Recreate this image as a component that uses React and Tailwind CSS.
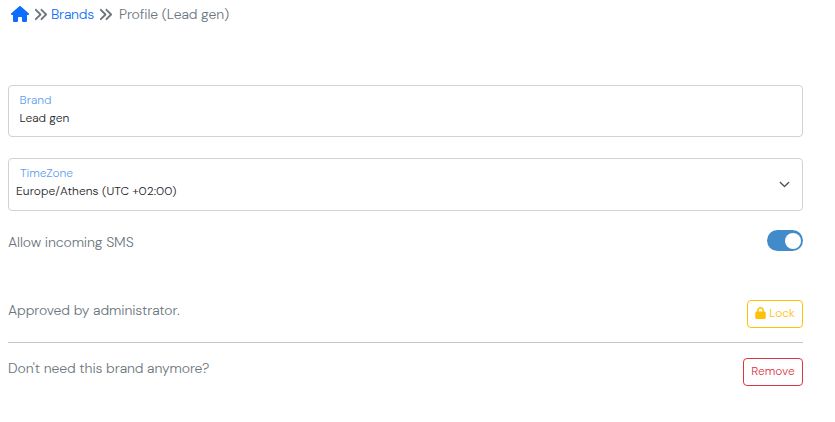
import React, { useState } from 'react'
import { FaAnglesRight, FaHouse, FaLock } from 'react-icons/fa6'
import { BsChevronDown } from 'react-icons/bs'

function Breadcrumb() {
  return (
    <nav aria-label="breadcrumb" className="flex h-[29px] items-center pl-[3px] text-[14px]">
      <a href="#" aria-label="Home" className="text-[#0d6efd]">
        <FaHouse className="mb-[2px] h-[16px] w-[18px]" />
      </a>
      <FaAnglesRight className="mb-px ml-1 h-[15px] w-[15px] text-[#6c757d]" />
      <a href="#" className="ml-[3px] w-[45px] whitespace-nowrap tracking-[-0.25px] text-[#0d6efd]">Brands</a>
      <FaAnglesRight className="mb-px ml-[2px] h-[15px] w-[15px] text-[#6c757d]" />
      <span className="ml-[6px] tracking-[-0.1px]">Profile (Lead gen)</span>
    </nav>
  )
}

export default function App() {
  const [brand, setBrand] = useState('Lead gen')
  const [allowSms, setAllowSms] = useState(true)

  return (
    <div className="h-[422px] bg-white pl-2 pr-8 font-['DM_Sans','Inter',sans-serif] text-[14px] font-light text-[#6c757d]">
      <Breadcrumb />

      <label className="mt-14 flex h-[52px] flex-col rounded-[4px] border border-[#d0d2d4] pl-[10.5px] pt-[5px] text-[12px]">
        <span className="h-[18px] leading-[18px] text-[#5f9fee]">Brand</span>
        <input
          value={brand}
          onChange={e => setBrand(e.target.value)}
          className="h-[18px] bg-transparent leading-[18px] text-[#212529] outline-none"
        />
      </label>

      <div className="mt-[21px] flex h-[53px] items-center justify-between rounded-[4px] border border-[#d0d2d4] pl-[7px] pr-[12px] text-[12px]">
        <div className="flex h-full flex-col pt-[5px]">
          <span className="h-[18px] pl-1 leading-[18px] tracking-[-0.1px] text-[#5f9fee]">TimeZone</span>
          <span className="h-[18px] leading-[18px] tracking-[0.08px] text-[#212529]">Europe/Athens (UTC +02:00)</span>
        </div>
        <BsChevronDown className="h-[11px] w-[11px] stroke-1 text-[#343a40]" />
      </div>

      <div className="mt-[19px] flex h-[24px] items-start justify-between">
        <span className="pt-[2px] leading-[20px] tracking-[-0.1px]">Allow incoming SMS</span>
        <button
          role="switch"
          aria-checked={allowSms}
          aria-label="Allow incoming SMS"
          onClick={() => setAllowSms(!allowSms)}
          className={allowSms
            ? 'flex h-[21px] w-[36px] items-center justify-end rounded-full bg-[#428bca] px-[2px]'
            : 'flex h-[21px] w-[36px] items-center justify-start rounded-full bg-gray-300 px-[2px]'}
        >
          <span className="h-[16px] w-[16px] rounded-full bg-white" />
        </button>
      </div>

      <div className="mt-[46px] flex h-[43px] items-start justify-between border-b border-[#c4c6c8]">
        <span className="leading-[20px] tracking-[-0.08px]">Approved by administrator.</span>
        <button className="flex h-[28px] w-[56px] items-center justify-center gap-[3px] rounded-[4px] border border-[#ffc107] pb-[2px] text-[12px] text-[#ffc107]">
          <FaLock className="h-[12px] w-[11px]" />
          Lock
        </button>
      </div>

      <div className="mt-[15px] flex items-start justify-between">
        <span className="leading-[20px] tracking-[-0.1px]">Don't need this brand anymore?</span>
        <button className="h-[28px] w-[60px] rounded-[4px] border border-[#dc3545] pb-[2px] text-[12px] text-[#dc3545]">Remove</button>
      </div>
    </div>
  )
}
